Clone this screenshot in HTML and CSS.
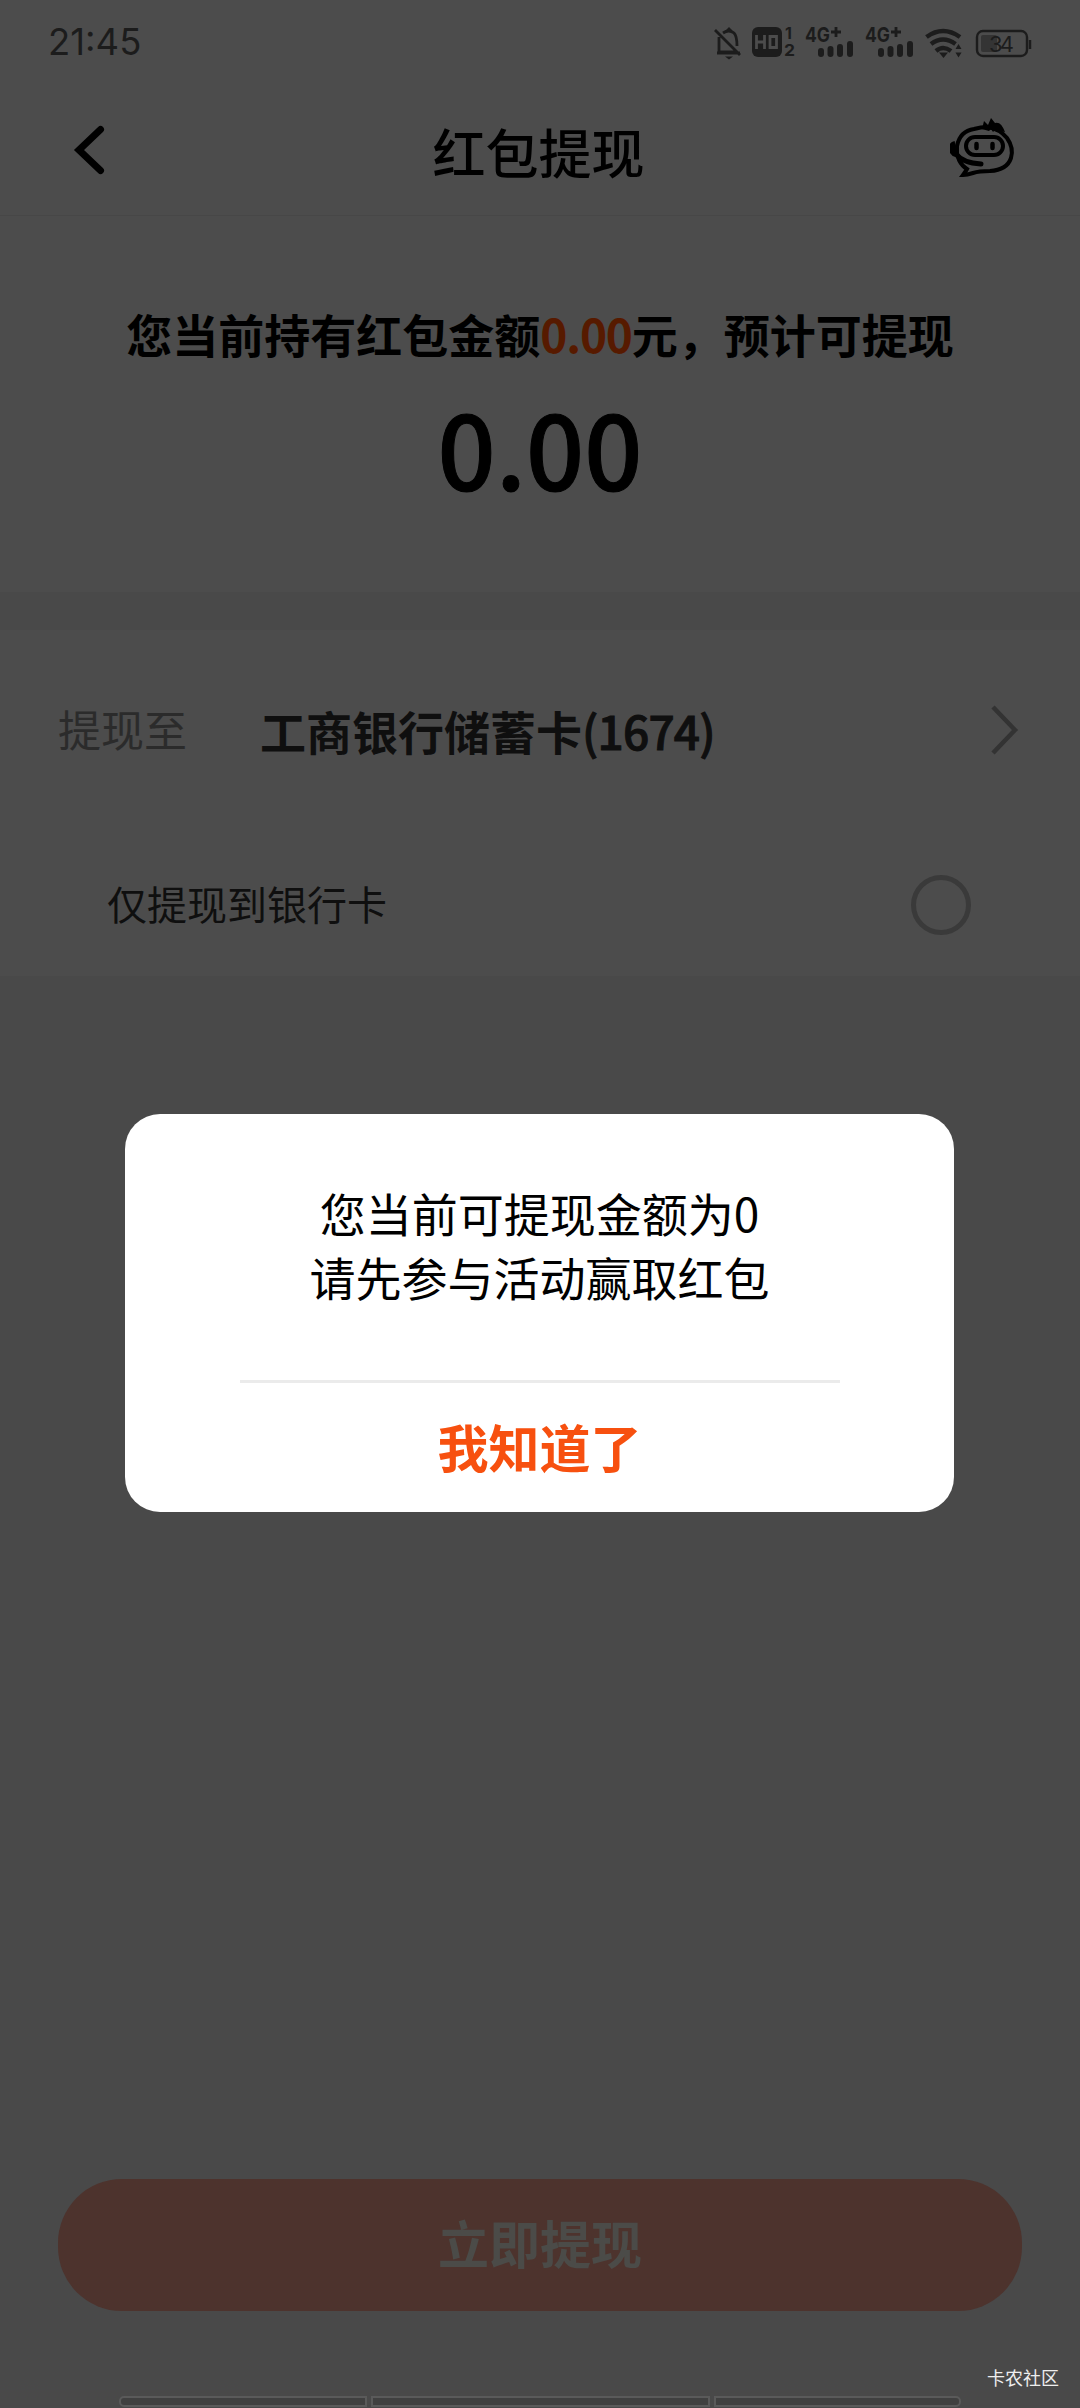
FILE: index.html
```html
<!DOCTYPE html>
<html lang="zh-CN">
<head>
<meta charset="utf-8">
<title>红包提现</title>
<link rel="stylesheet" href="styles.css">
</head>
<body>
<div class="screen">
  <div class="top">
    <div class="status">
      <span class="clock">21:45</span>
      <svg class="status-icons" width="330" height="44" viewBox="0 0 330 44" fill="none" stroke="#1c1c1c">
        <g stroke-width="2.8">
          <path d="M4 8 29 33M8 15V30H26M6 31H29M12 11Q18 7 23 11Q26 14 26 24"/>
          <path d="M14 34.500h8l-4 3zM15 8l3-3 3 3z" fill="#1c1c1c" stroke="none"/>
        </g>
        <rect x="41" y="5" width="30" height="30" rx="6" fill="#1c1c1c" stroke="none"/>
        <path d="M45.500 13V27M53.500 13V27M45.500 20H53.500M59 14.500H65.500V25.500H59Z" stroke="#4c4c4c" stroke-width="2.8"/>
        <g class="tiny" fill="#1c1c1c" stroke="none">
          <text x="74" y="17" font-size="16">1</text><text x="73" y="34" font-size="16" textLength="11" lengthAdjust="spacingAndGlyphs">2</text>
          <text x="94" y="20" font-size="20" textLength="25" lengthAdjust="spacingAndGlyphs">4G</text>
          <text x="154" y="20" font-size="20" textLength="25" lengthAdjust="spacingAndGlyphs">4G</text>
        </g>
        <path d="M120 10H130M125 5V15M180 10H190M185 5V15" stroke-width="2.8"/>
        <path d="M110 29V32M119.500 27V32M129 25V32M139 22V32M170 29V32M179.500 27V32M189 25V32M199 22V32" stroke-width="6" stroke-linecap="round"/>
        <path d="M215.500 15Q232 3 249 15M220 22Q232 13 244.500 22M225 29Q232 23 240 29" stroke-width="4.500"/>
        <path d="M228 30.500h9l-4.500 5.500zM244.500 27l3-5 3 5zM244.500 30.500h6l-3 5z" fill="#1c1c1c" stroke="none"/>
        <rect x="266" y="9" width="50" height="25" rx="6" stroke-width="2.4"/>
        <rect x="270" y="13" width="16" height="17" rx="2" fill="#343434" stroke="none"/>
        <path d="M319 18V27" stroke-width="2.500"/>
        <text class="charge" x="278" y="29.500" fill="#1c1c1c" stroke="none" font-size="22" textLength="25">34</text>
      </svg>
    </div>
    <div class="nav">
      <svg width="34" height="52" viewBox="0 0 34 52"><path d="M29.500 5.500 8 26 29.500 46.500" fill="none" stroke="#000" stroke-width="7" stroke-linecap="round"/></svg>
      <h1>红包提现</h1>
      <svg width="68" height="64" viewBox="0 0 68 64" fill="none" stroke="#000" stroke-width="4">
        <path d="M9 42Q6 35 7 28Q10 13 24 11Q31 9 37 9Q50 11 57 20Q64 30 61 40Q57 52 40 53Q29 53 23 55Q17 57 13 57Q16 53 17 51Q12 48 9 42Z"/>
        <path d="M32 11 34 3 38 7 41 0 45 5Q51 3 55 14L48 13 46 11 43 14 41 11 39 13Z" fill="#000" stroke="none"/>
        <rect x="16" y="19" width="37" height="18" rx="9"/>
        <path d="M26.500 26V30M42.500 26V30" stroke-width="4.500" stroke-linecap="round"/>
        <path d="M5 25Q0 26 1 32Q2 36 6 37" fill="#000"/>
        <path d="M6 36Q13 45 31 46" stroke-width="5" stroke-linecap="round"/>
      </svg>
    </div>
  </div>
  <section class="amount">
    <p class="hold">您当前持有红包金额<span class="hot">0.00</span>元，预计可提现</p>
    <p class="sum">0.00</p>
  </section>
  <section class="target">
    <div class="row card-row">
      <span class="label">提现至</span>
      <span class="bank">工商银行储蓄卡<span class="digits">(1674)</span></span>
      <svg width="30" height="52" viewBox="0 0 30 52"><path d="M3 3 25 26 3 49" fill="none" stroke="#333" stroke-width="4.500"/></svg>
    </div>
    <div class="row only-row"><span>仅提现到银行卡</span><i class="radio"></i></div>
  </section>
  <div class="submit">立即提现</div>
  <div class="tabs"><i></i><i></i><i></i></div>
  <div class="dialog">
    <p>您当前可提现金额为0<br>请先参与活动赢取红包</p>
    <div class="ok">我知道了</div>
  </div>
  <span class="mark">卡农社区</span>
</div>
</body>
</html>
```
FILE: styles.css
```css
* { box-sizing: border-box; margin: 0; padding: 0; }
body { background: #494949; font-family: "Noto Sans CJK SC", sans-serif; }
.screen { position: relative; width: 1080px; height: 2408px; display: flex; flex-direction: column; background: #494949; overflow: hidden; }
svg { display: block; flex: none; }
.top { height: 216px; background: #4c4c4c; border-bottom: 1px solid #474747; }
.status { height: 84px; display: flex; justify-content: space-between; padding: 9px 48px 0 48px; color: #1c1c1c; }
.clock { font: 36.5px/66px Inter, sans-serif; }
.status-icons { margin-top: 13px; margin-right: -9px; }
.tiny { font-family: Inter, sans-serif; font-weight: 700; }
.charge { font-family: Inter, sans-serif; }
.nav { height: 131px; display: flex; align-items: flex-start; justify-content: space-between; padding: 33px 62px 0 71px; }
.nav svg { margin-top: 1px; }
.nav svg:first-child { margin-top: 7px; margin-right: 22px; }
h1 { font-size: 53px; font-weight: 500; line-height: 68px; color: #000; }
.amount { height: 376px; background: #4c4c4c; text-align: center; padding-top: 84px; color: #000; }
.hold { font-size: 46px; line-height: 66px; font-weight: 700; white-space: nowrap; }
.hot { color: #571a00; letter-spacing: -1.2px; }
.sum { font-size: 102px; line-height: 130px; font-weight: 500; margin-top: 16px; -webkit-text-stroke: 1px #000; }
.target { height: 346px; margin-top: 38px; background: #4c4c4c; padding-top: 60px; }
.row { display: flex; align-items: center; }
.card-row { height: 80px; padding: 0 60px 0 58px; }
.label { font-size: 43px; width: 202px; color: #2b2b2b; padding-bottom: 5px; }
.bank { font-size: 46px; font-weight: 700; color: #0f0f0f; flex: 1; padding-bottom: 1px; }
.digits { font-weight: 500; letter-spacing: -0.8px; -webkit-text-stroke: 1px #0f0f0f; }
.only-row { height: 80px; margin-top: 95px; padding: 0 109px 0 107px; justify-content: space-between; font-size: 40px; color: #0f0f0f; }
.only-row span { padding-bottom: 5px; }
.radio { width: 60px; height: 60px; border: 5px solid #3a3a3a; border-radius: 50%; }
.submit { width: 964px; height: 132px; margin: 1203px auto 0; flex: none; border-radius: 64px; background: #4d332d; color: #4b4b48; font-size: 51px; font-weight: 700; line-height: 126px; text-align: center; }
.tabs { display: grid; grid-template-columns: 248px 339px 247px; gap: 4px; width: 842px; height: 11px; margin: 85px 0 0 119px; }
.tabs i { border: 2px solid #5a5a5a; background: #404040; }
.tabs i:first-child { border-radius: 5px 0 0 5px; }
.tabs i:last-child { border-radius: 0 5px 5px 0; }
.dialog { position: absolute; left: 125px; top: 1113.5px; width: 829px; height: 398px; border-radius: 35px; background: #fff; display: flex; flex-direction: column; align-items: center; text-align: center; padding-top: 66px; }
.dialog p { font-size: 46px; line-height: 64px; color: #000; }
.ok { width: 600px; margin-top: 72px; border-top: 3px solid #ebebeb; padding-top: 26px; font-size: 51px; line-height: 74px; font-weight: 700; color: #f7500f; }
.mark { position: absolute; right: 21px; bottom: 18px; font-size: 18px; line-height: 26px; color: #eee; }
```
